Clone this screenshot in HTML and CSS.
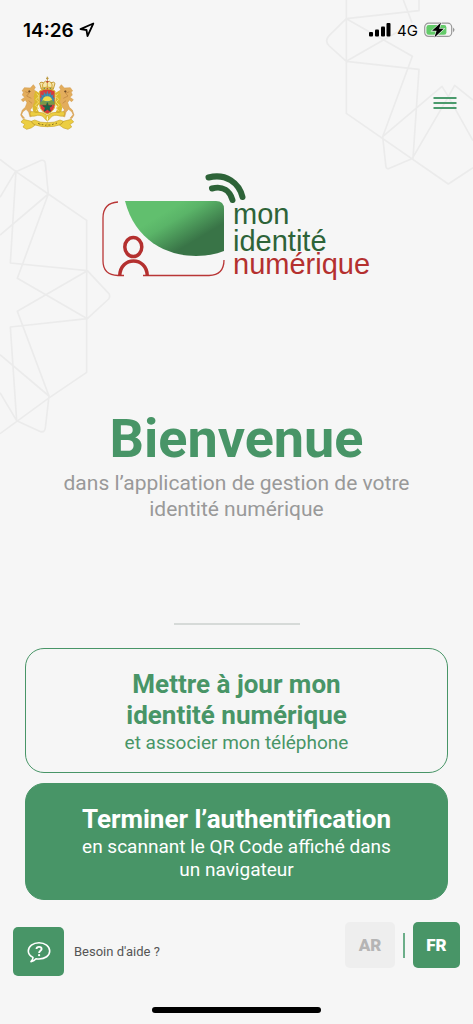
FILE: index.html
```html
<!DOCTYPE html>
<html lang="fr">
<head>
<meta charset="utf-8">
<meta name="viewport" content="width=device-width, initial-scale=1">
<title>Mon identité numérique</title>
<link rel="stylesheet" href="styles.css">
</head>
<body>
<div class="screen">
  <svg class="pattern pattern-right" width="163" height="190" viewBox="0 0 489 570" aria-hidden="true">
    <path d="M109 0V340L415 552L489 503M280 0L306 68M327 0V32L109 56L58 106Q42 122 58 138L109 184L327 208L309 475L235 506Q228 508 227 494L218 410L396 259L415 290L489 422M109 56L307 169L218 410M109 184L262 96M415 290L434 256L489 300M415 290L307 475"/>
  </svg>
  <svg class="pattern pattern-left" width="120" height="290" viewBox="0 0 360 870" aria-hidden="true">
    <path d="M0 28L48 65L124 31Q134 29 136 40L145 132L260 211V667L145 745L0 851M0 142L48 62L31 339L262 362L326 430Q332 438 326 447L262 506L31 531L50 812L0 728M48 65L145 132L0 255M145 132L52 385L262 506M262 362L52 484L147 738L0 614M147 738L136 834Q134 848 122 845L50 812"/>
  </svg>

  <div class="status">
    <div class="status-group">
      <span class="time">14:26</span>
      <svg width="16" height="16" viewBox="0 0 16 16" aria-hidden="true"><path d="M14.3 1.5L1.5 7.1L7.5 8L8.5 14.1Z" fill="none" stroke="#000" stroke-width="1.8" stroke-linejoin="round"/></svg>
    </div>
    <div class="status-group status-right">
      <svg width="22" height="14" viewBox="0 0 22 14" aria-hidden="true"><rect y="9" width="4" height="4.5" rx="1"/><rect x="6" y="6.5" width="4" height="7" rx="1"/><rect x="12" y="3.5" width="4" height="10" rx="1"/><rect x="17.5" y="0" width="4" height="13.5" rx="1"/></svg>
      <span class="network">4G</span>
      <svg width="31" height="16" viewBox="0 0 31 16" aria-hidden="true">
        <rect x=".7" y="1.2" width="27" height="13.2" rx="4" fill="none" stroke="#999" stroke-width="1.2"/>
        <path d="M29 5.5Q32 7.8 29 10.2Z" fill="#999"/>
        <rect x="2.4" y="3" width="20" height="9.8" rx="2.4" fill="#63cb69"/>
        <path d="M17 .6L8 8.8H12.6L10.4 15.4L19.8 6.8H15.2Z" fill="#000" stroke="#f6f6f6" stroke-width="1.2" paint-order="stroke"/>
      </svg>
    </div>
  </div>

  <header class="header">
    <svg class="emblem" width="55" height="54" viewBox="30 31 165 162" role="img" aria-label="Armoiries du Royaume du Maroc">
      <g fill="#e3ad5c" stroke="#cf9746" stroke-width="1.5">
        <path id="lion" d="M61 67L70 57L76 65L72 72L79 78L83 88L78 94L72 91L77 106L72 118L61 132L67 150L60 154L56 139L48 131L38 139L35 147L44 158L38 158L32 148L37 133L46 125L51 111L46 103L39 108L34 102L44 95L37 88L41 78L36 76L43 66Z"/>
        <use href="#lion" transform="translate(224 0) scale(-1 1)"/>
      </g>
      <g fill="none" stroke="#b98140" stroke-width="2"><path d="M46 78L57 83L50 91L64 98M178 78L167 83L174 91L160 98M56 105L66 113M168 105L158 113"/></g>
      <path d="M54 76l5-2 3 4-5 3zM170 76l-5-2-3 4 5 3z" fill="#704b27"/>
      <path d="M83 79Q75 93 82 111Q68 125 82 145M141 79Q149 93 142 111Q156 125 142 145" fill="none" stroke="#dcb92e" stroke-width="14"/>
      <path d="M80 84l7 8-9 9 8 8-10 10 10 8-8 9M144 84l-7 8 9 9-8 8 10 10-10 8 8 9" fill="none" stroke="#f3de70" stroke-width="3"/>
      <path d="M89 76Q112 64 135 76V119Q133 137 112 145Q91 137 89 119Z" fill="#d83c3c" stroke="#dabb31" stroke-width="3"/>
      <path d="M91 109Q91 84 112 83Q133 84 133 109Z" fill="#3f86a4"/>
      <path d="M94 87l7 10M102 80l4 12M112 77v14M122 80l-4 12M130 87l-7 10M90 98l9 5M134 98l-9 5" stroke="#3d93b6" stroke-width="3"/>
      <path d="M97 107Q99 92 112 92Q125 92 127 107Z" fill="#f1db48"/>
      <path d="M90 110L100 104L112 109L124 103L134 110V117H90Z" fill="#759a49"/>
      <path d="M112 111L115 120L126 120L118 126L121 137L112 131L103 137L106 126L98 120L109 120Z" fill="#176848" stroke="#175b42" stroke-width="2"/>
      <path d="M94 70L89 53Q91 47 101 51Q106 43 112 49Q118 43 123 51Q133 47 135 53L130 70Z" fill="#f6e4aa" stroke="#c49a35" stroke-width="3"/>
      <path d="M99 68Q95 56 101 51M112 68V48M125 68Q129 56 123 51M92 68Q112 60 132 68M93 73Q112 67 131 73" fill="none" stroke="#d1a834" stroke-width="3"/>
      <path d="M112 33V45M108 38H116" stroke="#ba963a" stroke-width="3"/>
      <g fill="#c43d38"><circle cx="112" cy="48" r="3"/><circle cx="112" cy="69" r="2"/></g><g fill="#44865c"><circle cx="103" cy="68" r="2"/><circle cx="121" cy="68" r="2"/></g>
      <g fill="#ecce42" stroke="#c9a52c" stroke-width="2" stroke-linejoin="round">
        <path id="ribbon" d="M113 150Q98 138 84 140Q76 142 72 138L62 138Q58 144 62 151Q72 153 83 149Q98 147 106 161H113ZM33 169L40 161L64 167L74 163Q90 172 113 171V183Q92 184 76 178Q66 188 50 191L39 184L44 176Z"/>
        <use href="#ribbon" transform="translate(224 0) scale(-1 1)"/>
      </g>
      <path d="M64 167Q66 174 76 178M160 167Q158 174 148 178" fill="none" stroke="#b28d22" stroke-width="2"/>
      <ellipse cx="112" cy="158" rx="4" ry="8" fill="#fff7bf" stroke="#d6b52c" stroke-width="3"/>
      <path d="M84 173l7 3M95 177l5 0M105 179l4-1M115 178l6 0M126 177l5-2M137 174l4-2" stroke="#705e1c" stroke-width="2.5"/>
    </svg>
    <button class="menu" type="button" aria-label="Menu">
      <svg width="24" height="14" viewBox="0 0 24 14" aria-hidden="true"><path d="M.5 2H23.5M.5 7H23.5M.5 12H23.5" stroke="#4b9b6d" stroke-width="1.8"/></svg>
    </button>
  </header>

  <main class="main">
    <svg class="logo" width="274" height="112" viewBox="0 0 274 112" role="img" aria-label="mon identité numérique">
      <defs><linearGradient id="leaf" gradientUnits="userSpaceOnUse" x1="72" y1="38" x2="96" y2="78"><stop offset="0" stop-color="#61bf6e"/><stop offset=".25" stop-color="#5ab468"/><stop offset=".85" stop-color="#397447"/><stop offset="1" stop-color="#397447"/></linearGradient></defs>
      <path d="M25 31H116Q124 31 124 39V81C90 94 38 83 25 31Z" fill="url(#leaf)"/>
      <path d="M18 32Q3 33 3 48V91Q3 105 18 105.500H24M43 105.500H109Q124 105 124 90" fill="none" stroke="#b93636" stroke-width="1.300"/>
      <g fill="none" stroke="#b4302f" stroke-width="3.500"><ellipse cx="33.300" cy="77" rx="8.500" ry="9.500"/><path d="M19.700 106C20 86 47 86 47.300 106"/></g>
      <g fill="none" stroke="#2d6338" stroke-width="6" stroke-linecap="round"><path d="M108.500 7.500C126 3 139 13 142.500 27"/><path d="M112 18.500C123 15.500 130 21 132.500 30"/></g>
      <g class="wordmark"><text x="133" y="54">mon</text><text x="133" y="81">identité</text><text class="wordmark-red" x="133" y="104">numérique</text></g>
    </svg>

    <h1 class="title">Bienvenue</h1>
    <p class="subtitle">dans l’application de gestion de votre identité numérique</p>
    <hr class="divider">
    <div class="actions">
      <button class="action action-outline" type="button">
        <span class="action-title">Mettre à jour mon<br>identité numérique</span>
        <span class="action-note">et associer mon téléphone</span>
      </button>
      <button class="action action-solid" type="button">
        <span class="action-title">Terminer l’authentification</span>
        <span class="action-note">en scannant le QR Code affiché dans<br>un navigateur</span>
      </button>
    </div>
  </main>

  <footer class="footer">
    <div class="help">
      <button class="help-button" id="help" type="button" aria-labelledby="help-label">
        <svg width="24" height="24" viewBox="0 0 24 24" aria-hidden="true"><path d="M6 17.400C2.500 15.700 1.300 13.500 1.300 11C1.300 6.300 6 2.700 12 2.700S22.700 6.300 22.700 11S18 19 12 19C10.500 19 9.800 18.900 9 18.700C7.700 20.300 5.800 21.200 4 21.600C5.300 20.300 6 19 6 17.400Z" fill="none" stroke="#fff" stroke-width="1.600" stroke-linejoin="round"/><path d="M9.500 9C9.600 6.100 14.600 6.100 14.600 9C14.600 10.900 12.100 10.800 12.100 13" fill="none" stroke="#fff" stroke-width="1.900"/><circle cx="12.100" cy="15.200" r="1.100" fill="#fff"/></svg>
      </button>
      <label class="help-label" id="help-label" for="help">Besoin d'aide ?</label>
    </div>
    <div class="languages">
      <button class="language" type="button">AR</button>
      <span class="language-separator"></span>
      <button class="language language-active" type="button" aria-pressed="true">FR</button>
    </div>
  </footer>
  <div class="home-indicator"></div>
</div>
</body>
</html>
```
FILE: styles.css
```css
* { box-sizing: border-box; }
body {
  margin: 0;
  background: #f6f6f6;
  font-family: Roboto, "Liberation Sans", sans-serif;
}
button {
  margin: 0;
  padding: 0;
  border: 0;
  background: none;
  font: inherit;
  cursor: pointer;
}
svg { display: block; flex-shrink: 0; }
.screen {
  position: relative;
  display: flex;
  flex-direction: column;
  min-height: 100vh;
  overflow: hidden;
  isolation: isolate;
}
.pattern {
  position: absolute;
  z-index: -1;
  fill: none;
  stroke: #ebebeb;
  stroke-width: 5;
  stroke-linejoin: round;
}
.pattern-right { top: 0; right: 0; }
.pattern-left { top: 150px; left: 0; }
.status {
  display: flex;
  align-items: center;
  justify-content: space-between;
  height: 60px;
  padding: 0 18px 0 23px;
  font-family: Inter, "Liberation Sans", sans-serif;
}
.status-group { display: flex; align-items: center; gap: 5px; }
.status-right { gap: 6px; }
.time { font-size: 19px; font-weight: 600; }
.network { font-size: 15px; }
.header {
  display: flex;
  align-items: center;
  justify-content: space-between;
  padding: 16px 16px 0 20px;
}
.main {
  display: flex;
  flex-direction: column;
  align-items: center;
  padding: 40px 25px 0;
}
.logo { max-width: 100%; }
.wordmark {
  font-family: "Liberation Sans", Arial, sans-serif;
  font-size: 29px;
  fill: #2d6338;
}
.wordmark-red { fill: #b4302f; }
.title {
  margin: 126px 0 0;
  color: #489567;
  font-size: 54px;
  line-height: 62px;
  font-weight: 700;
}
.subtitle {
  max-width: 380px;
  margin: 0;
  color: #999;
  font-size: 21px;
  line-height: 26px;
  text-align: center;
}
.divider {
  width: 126px;
  height: 2px;
  margin: 101px 0 23px;
  border: 0;
  background: #d6dad8;
}
.actions {
  display: flex;
  flex-direction: column;
  align-self: stretch;
  gap: 10px;
}
.action {
  display: flex;
  flex-direction: column;
  align-items: center;
  padding: 20px 16px 18px;
  border: 1px solid #489567;
  border-radius: 19px;
  text-align: center;
}
.action-outline { color: #489567; }
.action-solid { background: #489567; color: #fff; }
.action-title { font-size: 26px; line-height: 31px; font-weight: 700; }
.action-note { font-size: 19px; line-height: 23px; }
.footer {
  display: flex;
  align-items: flex-start;
  justify-content: space-between;
  padding: 22px 13px 0;
}
.help { display: flex; align-items: center; gap: 10px; padding-top: 5px; }
.help-button {
  display: flex;
  align-items: center;
  justify-content: center;
  width: 51px;
  height: 49px;
  border-radius: 5px;
  background: #489567;
}
.help-label { color: #555; font-size: 13px; line-height: 16px; }
.languages { display: flex; align-items: center; gap: 8px; }
.language {
  width: 50px;
  height: 46px;
  border-radius: 5px;
  background: #eee;
  color: #b5b5b5;
  font-size: 17px;
  font-weight: 900;
}
.language-active { width: 47px; background: #489567; color: #fff; }
.language-separator { width: 2px; height: 25px; background: #6cae89; }
.home-indicator {
  align-self: center;
  width: 169px;
  height: 6px;
  margin: auto 0 11px;
  border-radius: 3px;
  background: #000;
}
```
